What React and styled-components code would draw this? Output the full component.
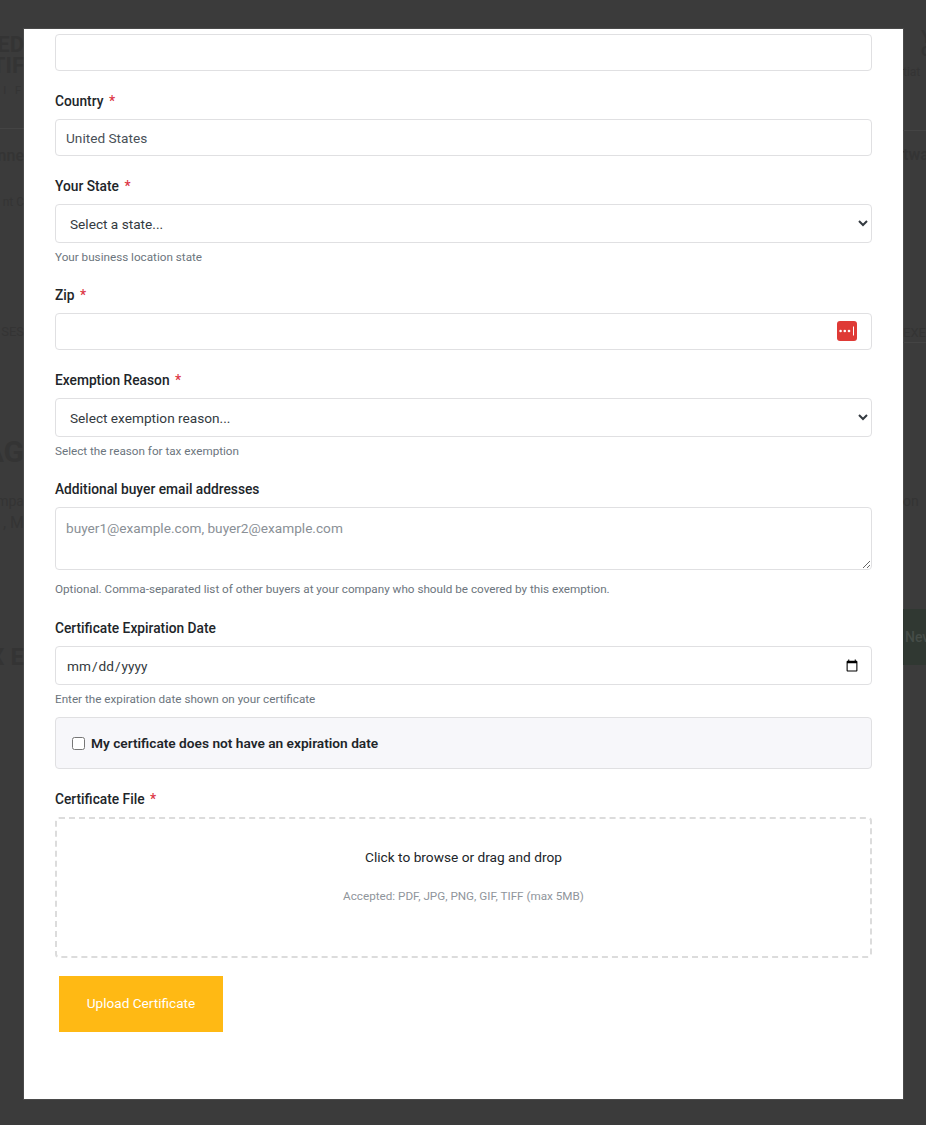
import styled, { createGlobalStyle } from 'styled-components';

const GlobalStyle = createGlobalStyle`
  html, body {
    margin: 0;
    padding: 0;
    background: #3b3b3b;
  }
  * {
    box-sizing: border-box;
  }
`;

const Page = styled.div`
  display: grid;
  grid-template-columns: 24px 879px 23px;
  width: 926px;
  height: 1125px;
  overflow: hidden;
  background: #3b3b3b;
  font-family: Roboto, 'Liberation Sans', sans-serif;
`;

const Gutter = styled.div`
  display: flex;
  flex-direction: column;
  align-items: ${props => (props.$right ? 'flex-start' : 'flex-end')};
  min-width: 0;
  overflow: hidden;
  white-space: nowrap;
`;

// faded words of the page behind the overlay, cut off by the modal
const Ghost = styled.div`
  flex: none;
  height: ${props => props.$height}px;
  margin-top: ${props => props.$gap}px;
  margin-left: ${props => props.$indent || 0}px;
  line-height: ${props => props.$height}px;
  font-size: ${props => props.$size || 14}px;
  font-weight: ${props => props.$weight || 400};
  letter-spacing: ${props => props.$spacing || 0}px;
  color: #343434;
`;

const GhostRule = styled.div`
  flex: none;
  align-self: stretch;
  height: 1px;
  margin-top: ${props => props.$gap}px;
  background: #444444;
`;

const GhostButton = styled.div`
  flex: none;
  align-self: stretch;
  height: 56px;
  margin-top: ${props => props.$gap}px;
  padding-left: 2px;
  line-height: 56px;
  font-size: 14px;
  font-weight: 500;
  color: #454c47;
  background: #303832;
`;

const Modal = styled.main`
  height: 1070px;
  margin-top: 29px;
  padding: 5px 31px 0;
  overflow: hidden;
  background: #ffffff;
  box-shadow: 0 0 0 1px rgba(255, 255, 255, 0.08);
`;

const Field = styled.div`
  margin-bottom: ${props => props.$space || 20}px;
`;

const Label = styled.label`
  display: block;
  margin-bottom: 8px;
  font-size: 13.75px;
  line-height: 20px;
  font-weight: 500;
  color: #212529;
`;

const Star = styled.span`
  margin-left: 5.5px;
  color: #dc3545;
`;

const InputWrap = styled.div`
  position: relative;
`;

const controlBase = `
  display: block;
  width: 100%;
  border: 1px solid #e0e0e2;
  border-radius: 4px;
  background-color: #ffffff;
  font-family: Roboto, 'Liberation Sans', sans-serif;
  font-size: 13.65px;
  color: #495057;
  outline: none;
`;

const Input = styled.input`
  ${controlBase}
  height: 37px;
  padding: 0 10px;
`;

const Select = styled.select`
  ${controlBase}
  height: 39px;
  padding: 0 10px;
  color: #343a40;
`;

const DateInput = styled.input`
  ${controlBase}
  height: 39px;
  padding: 0 10px;
  color: #343a40;
`;

const TextArea = styled.textarea`
  ${controlBase}
  height: 63px;
  padding: 10px;
  line-height: 20px;
  resize: vertical;

  &::placeholder {
    color: #8a9096;
    opacity: 1;
  }
`;

const Help = styled.div`
  margin-top: ${props => props.$gap || 6}px;
  font-size: 11.7px;
  line-height: 16px;
  color: #6c757d;
`;

const NoExpiry = styled.label`
  display: flex;
  align-items: center;
  gap: 6px;
  height: 52px;
  margin: 10px 0 20px;
  padding: 0 16px;
  border: 1px solid #e0e0e2;
  border-radius: 4px;
  background: #f7f7fa;
  font-size: 13.7px;
  font-weight: 600;
  color: #212529;
`;

const Check = styled.input`
  flex: none;
  width: 13px;
  height: 13px;
  margin: 0;
`;

const DropZone = styled.div`
  display: flex;
  flex-direction: column;
  align-items: center;
  height: 141px;
  padding-top: 28px;
  border: 2px dashed #dcdcdc;
  border-radius: 4px;
`;

const DropTitle = styled.div`
  font-size: 13.7px;
  line-height: 20px;
  color: #212529;
`;

const DropHint = styled.div`
  margin-top: 21px;
  font-size: 11.7px;
  line-height: 17px;
  color: #8f959b;
`;

const UploadButton = styled.button`
  display: block;
  width: 164px;
  height: 56px;
  margin: 18px 0 0 4px;
  padding: 0 0 2px;
  border: none;
  border-radius: 0;
  background: #ffb914;
  font-family: Roboto, 'Liberation Sans', sans-serif;
  font-size: 13.6px;
  font-weight: 400;
  color: #ffffff;
`;

const ManagerIcon = styled.svg`
  position: absolute;
  top: 8px;
  right: 15px;
  width: 20px;
  height: 20px;
`;

function PasswordManagerIcon() {
  return (
    <ManagerIcon viewBox="0 0 20 20" aria-hidden="true">
      <rect width="20" height="20" rx="3" fill="#df3a36" />
      <circle cx="3.6" cy="10" r="1.3" fill="#ffffff" />
      <circle cx="7.8" cy="10" r="1.3" fill="#ffffff" />
      <circle cx="12" cy="10" r="1.3" fill="#ffffff" />
      <rect x="16" y="5.5" width="1" height="9" fill="#ffffff" />
    </ManagerIcon>
  );
}

function App() {
  return (
    <>
      <GlobalStyle />
      <Page>
        <Gutter>
          <Ghost $gap={34} $height={22} $size={22} $weight={700}>ED</Ghost>
          <Ghost $gap={0} $height={20} $size={22} $weight={700}>TIF</Ghost>
          <Ghost $gap={8} $height={14} $size={11} $spacing={3}>I F</Ghost>
          <GhostRule $gap={30} />
          <Ghost $gap={17} $height={20} $size={16} $weight={500}>nne</Ghost>
          <Ghost $gap={28} $height={16} $size={12}>nt C</Ghost>
          <Ghost $gap={114} $height={16} $size={13}>SES</Ghost>
          <Ghost $gap={92} $height={40} $size={30} $weight={700}>AG</Ghost>
          <Ghost $gap={19} $height={20} $size={14}>mpa</Ghost>
          <Ghost $gap={2} $height={20} $size={16}>, M</Ghost>
          <Ghost $gap={109} $height={30} $size={24} $weight={700}>X E</Ghost>
        </Gutter>

        <Modal>
          <Field>
            <Input type="text" />
          </Field>

          <Field>
            <Label>Country<Star>*</Star></Label>
            <Input type="text" defaultValue="United States" />
          </Field>

          <Field>
            <Label>Your State<Star>*</Star></Label>
            <Select defaultValue="">
              <option value="">Select a state...</option>
            </Select>
            <Help>Your business location state</Help>
          </Field>

          <Field>
            <Label>Zip<Star>*</Star></Label>
            <InputWrap>
              <Input type="text" />
              <PasswordManagerIcon />
            </InputWrap>
          </Field>

          <Field>
            <Label>Exemption Reason<Star>*</Star></Label>
            <Select defaultValue="">
              <option value="">Select exemption reason...</option>
            </Select>
            <Help>Select the reason for tax exemption</Help>
          </Field>

          <Field $space={21}>
            <Label>Additional buyer email addresses</Label>
            <TextArea placeholder="buyer1@example.com, buyer2@example.com" />
            <Help $gap={11}>Optional. Comma-separated list of other buyers at your company who should be covered by this exemption.</Help>
          </Field>

          <div>
            <Label>Certificate Expiration Date</Label>
            <DateInput type="date" />
            <Help>Enter the expiration date shown on your certificate</Help>
          </div>

          <NoExpiry>
            <Check type="checkbox" />
            My certificate does not have an expiration date
          </NoExpiry>

          <div>
            <Label>Certificate File<Star>*</Star></Label>
            <DropZone>
              <DropTitle>Click to browse or drag and drop</DropTitle>
              <DropHint>Accepted: PDF, JPG, PNG, GIF, TIFF (max 5MB)</DropHint>
            </DropZone>
          </div>

          <UploadButton type="button">Upload Certificate</UploadButton>
        </Modal>

        <Gutter $right>
          <Ghost $gap={29} $height={16} $size={18} $weight={700} $indent={18}>Y</Ghost>
          <Ghost $gap={-3} $height={16} $size={18} $weight={700} $indent={18}>c</Ghost>
          <Ghost $gap={6} $height={16} $size={12}>tiat</Ghost>
          <GhostRule $gap={50} />
          <Ghost $gap={14} $height={20} $size={16} $weight={600}>twa</Ghost>
          <Ghost $gap={160} $height={16} $size={13}>EXE</Ghost>
          <GhostRule $gap={1} />
          <Ghost $gap={148} $height={20} $size={14}>on</Ghost>
          <GhostButton $gap={98}>Nev</GhostButton>
        </Gutter>
      </Page>
    </>
  );
}

export default App;
